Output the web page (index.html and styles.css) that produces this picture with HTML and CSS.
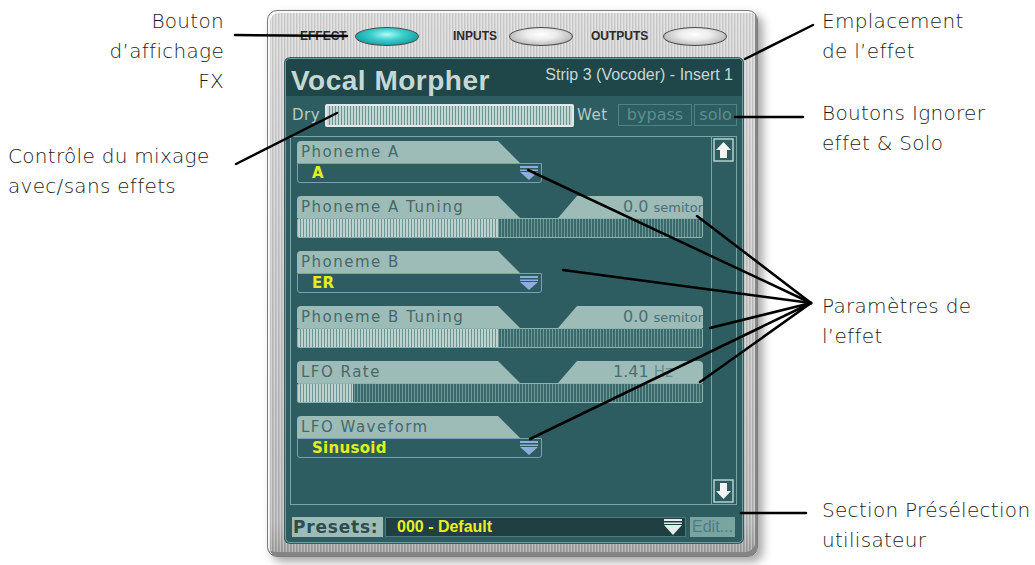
FILE: index.html
```html
<!DOCTYPE html>
<html lang="fr">
<head>
  <meta charset="UTF-8" />
  <title>Vocal Morpher</title>
  <link rel="stylesheet" href="styles.css">
</head>
<body>

<div class="page">

  <div class="notes-left">
    <p class="note note-fx">Bouton<br>d’affichage<br>FX</p>
    <p class="note note-mix">Contrôle du mixage<br>avec/sans effets</p>
  </div>

  <div class="plugin">
    <div class="fx-tabs">
      <div class="fx-btn fx-effect"><span class="fx-label">EFFECT</span><span class="oval on"></span></div>
      <div class="fx-btn fx-inputs"><span class="fx-label">INPUTS</span><span class="oval"></span></div>
      <div class="fx-btn fx-outputs"><span class="fx-label">OUTPUTS</span><span class="oval"></span></div>
    </div>

    <div class="screen">
      <div class="screen-head">
        <span class="fx-name">Vocal Morpher</span>
        <span class="fx-slot">Strip 3 (Vocoder) - Insert 1</span>
      </div>

      <div class="mix-row">
        <span class="mix-text dry">Dry</span>
        <div class="mix-bar"></div>
        <span class="mix-text wet">Wet</span>
        <span class="toggle bypass">bypass</span>
        <span class="toggle solo">solo</span>
      </div>

      <div class="params">
        <div class="param-list">
          <div class="param">
            <div class="tab-row"><div class="tab">Phoneme A</div></div>
            <div class="dropdown"><span class="choice">A</span>
              <svg class="drop-arrow" width="22" height="16" viewBox="0 0 22 16"><rect x="2" y="1" width="18" height="2" fill="#8eaed8"/><rect x="2" y="4.5" width="18" height="1.5" fill="#8eaed8"/><polygon points="2,7 20,7 11,15" fill="#8eaed8"/></svg>
            </div>
          </div>

          <div class="param">
            <div class="tab-row"><div class="tab">Phoneme A Tuning</div><div class="value-tab"><span class="num">0.0</span> <span class="unit">semitones</span></div></div>
            <div class="slider"><div class="slider-fill" style="width: 49.6%"></div></div>
          </div>

          <div class="param">
            <div class="tab-row"><div class="tab">Phoneme B</div></div>
            <div class="dropdown"><span class="choice">ER</span>
              <svg class="drop-arrow" width="22" height="16" viewBox="0 0 22 16"><rect x="2" y="1" width="18" height="2" fill="#8eaed8"/><rect x="2" y="4.5" width="18" height="1.5" fill="#8eaed8"/><polygon points="2,7 20,7 11,15" fill="#8eaed8"/></svg>
            </div>
          </div>

          <div class="param">
            <div class="tab-row"><div class="tab">Phoneme B Tuning</div><div class="value-tab"><span class="num">0.0</span> <span class="unit">semitones</span></div></div>
            <div class="slider"><div class="slider-fill" style="width: 49.6%"></div></div>
          </div>

          <div class="param">
            <div class="tab-row"><div class="tab">LFO Rate</div><div class="value-tab rate"><span class="num">1.41</span> <span class="unit-hz">Hz</span></div></div>
            <div class="slider"><div class="slider-fill" style="width: 13.6%"></div></div>
          </div>

          <div class="param">
            <div class="tab-row"><div class="tab">LFO Waveform</div></div>
            <div class="dropdown"><span class="choice">Sinusoid</span>
              <svg class="drop-arrow" width="22" height="16" viewBox="0 0 22 16"><rect x="2" y="1" width="18" height="2" fill="#8eaed8"/><rect x="2" y="4.5" width="18" height="1.5" fill="#8eaed8"/><polygon points="2,7 20,7 11,15" fill="#8eaed8"/></svg>
            </div>
          </div>
        </div>

        <div class="scroll-col">
          <svg class="scroll-btn" width="21" height="24" viewBox="0 0 21 24"><rect x="1" y="1" width="19" height="22" fill="none" stroke="#b4d0cf" stroke-width="1.5"/><polygon points="10.5,4 18,12 14,12 14,20 7,20 7,12 3,12" fill="#f2f6f6"/></svg>
          <svg class="scroll-btn" width="21" height="24" viewBox="0 0 21 24"><rect x="1" y="1" width="19" height="22" fill="none" stroke="#b4d0cf" stroke-width="1.5"/><polygon points="10.5,20 18,12 14,12 14,4 7,4 7,12 3,12" fill="#f2f6f6"/></svg>
        </div>
      </div>

      <div class="presets">
        <span class="presets-label">Presets:</span>
        <div class="presets-menu"><span>000 - Default</span>
          <svg class="drop-arrow" width="22" height="18" viewBox="0 0 22 18"><rect x="2" y="1" width="18" height="2" fill="#e4ecec"/><rect x="2" y="4.5" width="18" height="1.5" fill="#e4ecec"/><polygon points="2,7 20,7 11,17" fill="#e4ecec"/></svg>
        </div>
        <span class="edit">Edit...</span>
      </div>
    </div>
  </div>

  <div class="notes-right">
    <p class="note note-slot">Emplacement<br>de l’effet</p>
    <p class="note note-bypass">Boutons Ignorer<br>effet &amp; Solo</p>
    <p class="note note-params">Paramètres de<br>l’effet</p>
    <p class="note note-presets">Section Présélection<br>utilisateur</p>
  </div>

  <svg class="callouts" width="1035" height="565" viewBox="0 0 1035 565">
    <g stroke="#000" stroke-width="2.5" stroke-linecap="round" fill="none">
      <line x1="235" y1="35" x2="347" y2="36"/>
      <line x1="236" y1="164" x2="337" y2="113"/>
      <line x1="813" y1="25" x2="745" y2="59"/>
      <line x1="735" y1="117" x2="803" y2="117"/>
      <line x1="811" y1="303" x2="528" y2="170"/>
      <line x1="811" y1="303" x2="697" y2="216"/>
      <line x1="811" y1="303" x2="563" y2="270"/>
      <line x1="811" y1="303" x2="710" y2="328"/>
      <line x1="811" y1="303" x2="700" y2="382"/>
      <line x1="811" y1="303" x2="530" y2="439"/>
      <line x1="741" y1="513" x2="806" y2="513"/>
    </g>
  </svg>

</div>

</body>
</html>
```

FILE: styles.css
```css
body { margin: 0; background: #fff; }
.page { position: relative; width: 1035px; height: 565px; display: flex; overflow: hidden; font-family: "DejaVu Sans", sans-serif; }

/* callout notes */
.note { margin: 0; font-family: "DejaVu Sans ExtraLight", "DejaVu Sans", sans-serif; font-weight: 200; font-size: 20px; line-height: 30px; letter-spacing: 0.3px; color: #1c1c1c; white-space: nowrap; }
.notes-left { width: 230px; flex: none; }
.note-fx { margin-top: 6px; text-align: right; padding-right: 6px; }
.note-mix { margin-top: 45px; padding-left: 8px; }
.notes-right { flex: none; margin-left: 64px; }
.note-slot { margin-top: 6px; }
.note-bypass { margin-top: 32px; }
.note-params { margin-top: 133px; }
.note-presets { margin-top: 144px; }
.callouts { position: absolute; left: 0; top: 0; pointer-events: none; }

/* metal frame */
.plugin {
  flex: none; width: 491px; height: 547px; margin: 10px 0 0 37px; box-sizing: border-box;
  border: 1px solid #7c7c7c; border-radius: 10px; padding: 0 14px 13px 17px;
  background:
    repeating-linear-gradient(90deg, rgba(255,255,255,.3) 0 1px, rgba(0,0,0,.08) 1px 2px, rgba(255,255,255,0) 2px 3px),
    linear-gradient(#d8d8d8, #c6c6c6 50%, #b8b8b8 94%, #9c9c9c);
  box-shadow: inset 2px 2px 0 rgba(255,255,255,.8), inset -2px -4px 0 #858585, 5px 5px 10px rgba(0,0,0,.35);
}
.fx-tabs { height: 47px; box-sizing: border-box; padding-top: 3px; display: flex; align-items: center; }
.fx-btn { display: flex; align-items: center; gap: 8px; }
.fx-label { display: inline-block; font-family: "Liberation Sans", sans-serif; font-weight: bold; font-size: 12px; color: #2b2b2b; }
.fx-effect { margin-left: 15px; }
.fx-effect .fx-label { width: 47px; }
.fx-inputs { margin-left: 34px; }
.fx-inputs .fx-label { width: 48px; }
.fx-outputs { margin-left: 18px; }
.fx-outputs .fx-label { width: 64px; }
.oval { width: 64px; height: 19px; box-sizing: border-box; border: 1.5px solid #4a4a4a; border-radius: 50%;
  background: radial-gradient(ellipse at 50% 38%, #ffffff 0%, #ececec 35%, #b4b4b4 80%, #8c8c8c 100%); }
.oval.on { background: radial-gradient(ellipse at 50% 38%, #b4fbf8 0%, #3fd2cf 35%, #17a3a3 75%, #0d7272 100%); }

/* teal screen */
.screen { height: 485px; box-sizing: border-box; border: 1px solid #6e9ea0; box-shadow: 0 0 0 1px #3b5c5d;
  border-radius: 5px; background: #2e5d61; display: flex; flex-direction: column; padding-bottom: 5px; }
.screen-head { height: 37px; flex: none; background: #1f4649; border-radius: 4px 4px 0 0; display: flex; justify-content: space-between; align-items: flex-start; }
.fx-name { font-family: "Liberation Sans", sans-serif; font-weight: bold; font-size: 28px; line-height: 32px; letter-spacing: 0.5px; padding: 6px 0 0 5px; color: #c6d8d4; }
.fx-slot { font-family: "Liberation Sans", sans-serif; font-size: 16px; line-height: 18px; padding: 7px 9px 0 0; color: #c6d8d4; }

.mix-row { display: flex; align-items: center; height: 24px; margin: 7px 0 0 6px; }
.mix-text { font-size: 15px; letter-spacing: 0.5px; color: #b5cbc8; }
.dry { width: 33px; }
.wet { width: 38px; margin-left: 3px; }
.mix-bar { width: 249px; height: 23px; box-sizing: border-box; border: 2px solid #dfe9e8; border-radius: 2px;
  background: repeating-linear-gradient(90deg, #c2d8d5 0 2px, #6f9494 2px 3px); }
.toggle { height: 22px; box-sizing: border-box; border: 1.5px solid #4e8385; color: #5a8f91; font-size: 16px; line-height: 19px; text-align: center; }
.bypass { width: 74px; margin-left: 3px; }
.solo { width: 43px; margin-left: 2px; }

/* parameter area */
.params { height: 369px; flex: none; box-sizing: border-box; margin: 9px 5px 0 4px; border: 1px solid #7aa5a7; display: flex; }
.param-list { width: 412px; padding: 4px 0 0 6px; box-sizing: border-box; }
.param + .param { margin-top: 13px; }
.tab-row { display: flex; height: 22px; }
.tab { width: 223px; box-sizing: border-box; padding-left: 4px; background: #9dbcb8; border-radius: 4px 0 0 0;
  clip-path: polygon(0 0, 201px 0, 100% 100%, 0 100%); font-size: 15px; letter-spacing: 1.5px; line-height: 22px; color: #46696b; white-space: nowrap; }
.value-tab { margin-left: auto; width: 145px; box-sizing: border-box; padding-left: 65px; background: #9dbcb8; border-radius: 0 4px 0 0;
  clip-path: polygon(19px 0, 100% 0, 100% 100%, 0 100%); white-space: nowrap; overflow: hidden; color: #4a6f74; line-height: 22px; }
.value-tab.rate { padding-left: 55px; }
.num { font-size: 16px; }
.unit { font-size: 13px; }
.unit-hz { font-size: 15px; color: #6a8e92; }
.dropdown { width: 245px; height: 20px; box-sizing: border-box; border: 1.5px solid #7c9fb6; border-radius: 0 0 3px 3px; display: flex; align-items: center; }
.choice { padding-left: 14px; font-weight: bold; font-size: 15px; letter-spacing: 0.3px; color: #e6ee1c; }
.drop-arrow { margin-left: auto; margin-right: 1px; }
.slider { height: 20px; box-sizing: border-box; border: 1px solid #8db3b1; border-radius: 2px; overflow: hidden;
  background: repeating-linear-gradient(90deg, #3b6a6c 0 2px, #6c9896 2px 3px); }
.slider-fill { height: 100%; background: repeating-linear-gradient(90deg, #bcd3d0 0 2px, #6e9393 2px 3px); }
.scroll-col { margin-left: auto; width: 25px; box-sizing: border-box; border-left: 1px solid #7aa5a7; display: flex; flex-direction: column; justify-content: space-between; padding: 1px 0; }
.scroll-btn { display: block; margin-left: 1px; }

/* presets */
.presets { display: flex; height: 20px; margin: 12px 0 0 6px; }
.presets-label { width: 91px; box-sizing: border-box; padding-left: 1px; background: #9dbcb8; font-weight: bold; font-size: 17px; letter-spacing: 0.8px; line-height: 20px; color: #2e4c4e; }
.presets-menu { width: 301px; margin-left: 2px; box-sizing: border-box; border: 1px solid #4d7a7c; background: #1f3f42; display: flex; align-items: center; }
.presets-menu span { padding-left: 11px; font-family: "Liberation Sans", sans-serif; font-weight: bold; font-size: 16px; color: #e8f01e; }
.edit { width: 45px; margin-left: 4px; box-sizing: border-box; padding-left: 2px; background: #7aa4a0; color: #4b7d84; font-family: "Liberation Sans", sans-serif; font-size: 16px; line-height: 20px; }
```
